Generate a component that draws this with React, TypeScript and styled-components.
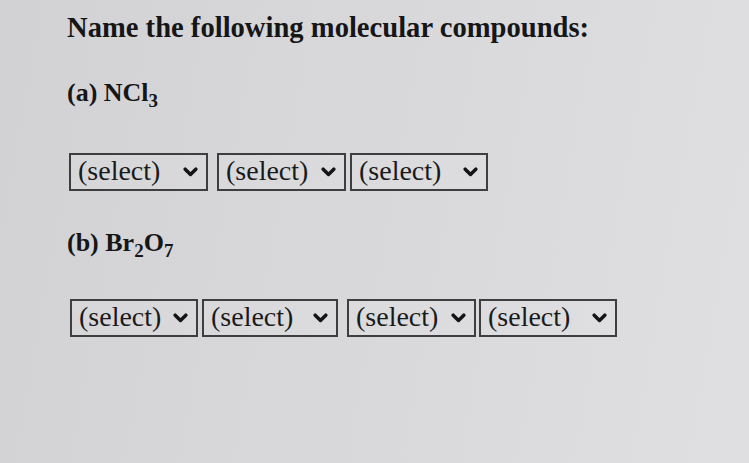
import React from "react";
import styled, { createGlobalStyle } from "styled-components";

const Global = createGlobalStyle`
  html, body { margin: 0; padding: 0; }
  body {
    width: 749px;
    height: 463px;
    overflow: hidden;
    background: linear-gradient(100deg, #d2d2d5 0%, #d8d8db 45%, #dfdfe1 100%);
    font-family: "Liberation Serif", "Times New Roman", serif;
    color: #161616;
  }
`;

const Page = styled.div`
  padding: 14px 0 0 67px;
`;

const Heading = styled.h1`
  margin: 0;
  font-size: 28.6px;
  line-height: 1;
  font-weight: 700;
  letter-spacing: 0;
`;

const Label = styled.div<{ $top: number }>`
  margin-top: ${(p) => p.$top}px;
  font-size: 26px;
  line-height: 1;
  font-weight: 700;
`;

const Sub = styled.sub`
  font-size: 19px;
  line-height: 0;
  vertical-align: -6px;
`;

const Row = styled.div<{ $top: number; $left: number }>`
  display: flex;
  align-items: flex-start;
  margin-top: ${(p) => p.$top}px;
  margin-left: ${(p) => p.$left}px;
`;

const Wrap = styled.span<{ $w: number; $ml: number }>`
  position: relative;
  display: inline-block;
  width: ${(p) => p.$w}px;
  height: 38px;
  margin-left: ${(p) => p.$ml}px;
  flex: none;
`;

const NativeSelect = styled.select`
  appearance: none;
  -webkit-appearance: none;
  box-sizing: border-box;
  width: 100%;
  height: 100%;
  margin: 0;
  padding: 0 0 3px 7px;
  border: 2px solid #3e3e40;
  border-radius: 0;
  background: rgba(255, 255, 255, 0.08);
  font-family: "Liberation Serif", "Times New Roman", serif;
  font-size: 28px;
  color: #1a1a1a;
  outline: none;
`;

const Chevron = styled.svg`
  position: absolute;
  right: 10px;
  top: 14px;
  width: 15px;
  height: 10px;
  pointer-events: none;
`;

function Select({ w, ml = 0 }: { w: number; ml?: number }) {
  return (
    <Wrap $w={w} $ml={ml}>
      <NativeSelect defaultValue="">
        <option value="">(select)</option>
      </NativeSelect>
      <Chevron viewBox="0 0 15 10">
        <polyline
          points="2.2,2.2 7.5,7.4 12.8,2.2"
          fill="none"
          stroke="#141414"
          strokeWidth="3.5"
          strokeLinecap="round"
          strokeLinejoin="round"
        />
      </Chevron>
    </Wrap>
  );
}

export default function App() {
  return (
    <>
      <Global />
      <Page>
        <Heading>Name the following molecular compounds:</Heading>
        <Label $top={37.5}>
          (a) NCl<Sub>3</Sub>
        </Label>
        <Row $top={47} $left={2}>
          <Select w={139} />
          <Select w={129} ml={9} />
          <Select w={138} ml={4} />
        </Row>
        <Label $top={39}>
          (b) Br<Sub>2</Sub>O<Sub>7</Sub>
        </Label>
        <Row $top={43} $left={3}>
          <Select w={128} />
          <Select w={136} ml={4} />
          <Select w={129} ml={9} />
          <Select w={138} ml={3} />
        </Row>
      </Page>
    </>
  );
}
